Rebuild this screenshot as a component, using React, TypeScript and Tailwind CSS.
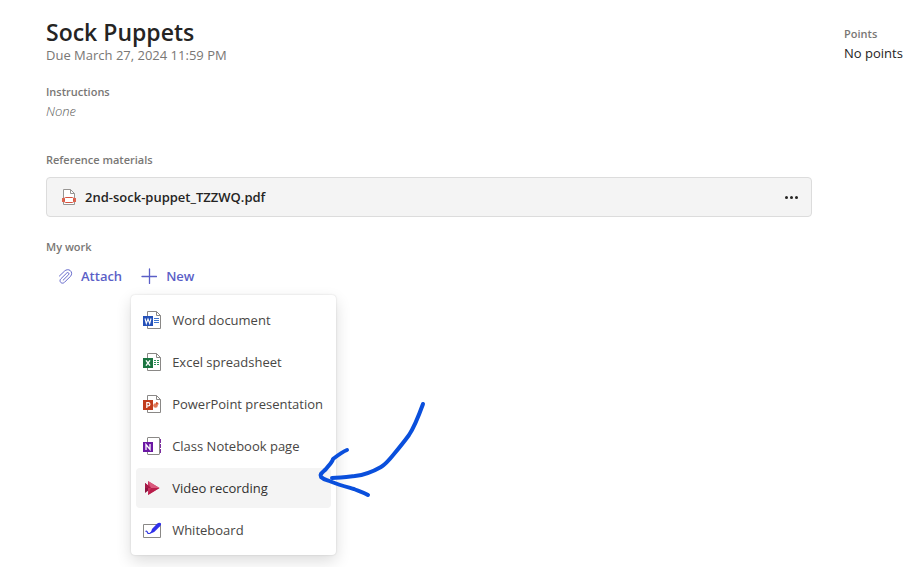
import * as React from "react";

type IconProps = { className?: string };

function WordIcon({ className }: IconProps) {
  return (
    <svg viewBox="0 0 18 18" className={className} fill="none" aria-hidden="true">
      <path d="M4.5.5h9l4 4v13h-13z" fill="#fff" stroke="#8a8886" />
      <path d="M13.5.5v4h4" stroke="#8a8886" />
      <path d="M11 7.5h5M11 9.5h5M11 11.5h5" stroke="#3f76d0" />
      <path d="M0 5h10v10H0z" fill="#2450b8" />
      <path d="M2 7.5l1.3 5L5 8l1.7 4.5 1.3-5" stroke="#fff" strokeWidth="1.1" />
    </svg>
  );
}

function ExcelIcon({ className }: IconProps) {
  return (
    <svg viewBox="0 0 18 18" className={className} fill="none" aria-hidden="true">
      <path d="M4.5.5h9l4 4v13h-13z" fill="#fff" stroke="#8a8886" />
      <path d="M13.5.5v4h4" stroke="#8a8886" />
      <path d="M11 7.5h2M14 7.5h2M11 9.5h2M14 9.5h2M11 11.5h2M14 11.5h2" stroke="#2b9058" />
      <path d="M0 5h10v10H0z" fill="#1a7440" />
      <path d="M3 7.3l4 5.4M7 7.3l-4 5.4" stroke="#fff" strokeWidth="1.4" />
    </svg>
  );
}

function PowerPointIcon({ className }: IconProps) {
  return (
    <svg viewBox="0 0 18 18" className={className} fill="none" aria-hidden="true">
      <path d="M4.5.5h9l4 4v13h-13z" fill="#fff" stroke="#8a8886" />
      <path d="M13.5.5v4h4" stroke="#8a8886" />
      <circle cx="12.5" cy="10.5" r="2.3" fill="#e07a5a" />
      <path d="M13 7a2.6 2.6 0 0 1 2.6 2.6H13z" fill="#d35230" />
      <path d="M0 5h10v10H0z" fill="#c13b1b" />
      <path d="M3.8 13V7.6h1.500a1.600 1.600 0 0 1 0 3.200H3.8" stroke="#fff" strokeWidth="1.2" />
    </svg>
  );
}

function NotebookIcon({ className }: IconProps) {
  return (
    <svg viewBox="0 0 18 18" className={className} fill="none" aria-hidden="true">
      <rect x="4.5" y=".5" width="12" height="17" rx=".5" fill="#fff" stroke="#8a8886" />
      <path d="M17.5 2v4M17.5 7v4M17.5 12v4" stroke="#7b2f9e" />
      <path d="M0 5h10v10H0z" fill="#6a17a3" />
      <path d="M3 13V7.5l4 5V7" stroke="#fff" strokeWidth="1.3" />
    </svg>
  );
}

function StreamIcon({ className }: IconProps) {
  return (
    <svg viewBox="0 0 18 18" className={className} aria-hidden="true">
      <path d="M2 4v10l4-3V7z" fill="#8c1440" />
      <path d="M5 2l11.5 7L5 16z" fill="#c9305e" />
      <path d="M5 2l11.5 7H8z" fill="#d9587c" />
      <path d="M8 9h8.5L5 16z" fill="#b81d4a" />
      <path d="M2 4l6 5H2z" fill="#a51a47" />
    </svg>
  );
}

function WhiteboardIcon({ className }: IconProps) {
  return (
    <svg viewBox="0 0 18 18" className={className} fill="none" aria-hidden="true">
      <path d="M.5 3.5h17v13H.5z" fill="#fff" stroke="#8a8886" />
      <path d="M2.5 10.5c1-.6 1.600-.3 1.800.7.3 1.500 1.500 1.500 2.700 1l2-1.500" stroke="#3136e0" strokeWidth="1.2" />
      <path d="M7.5 12.5L9 8l5-5.300c1.200-1.200 3.600-1.200 4-.2.3 1-.4 2.200-1.200 3L11.200 11z" fill="#3030ea" />
    </svg>
  );
}

function PdfIcon({ className }: IconProps) {
  return (
    <svg viewBox="0 0 16 16" className={className} fill="none" aria-hidden="true">
      <path d="M2.5.5h7l4 4v11h-11z" fill="#fff" stroke="#979593" />
      <path d="M9.5.5v4h4" stroke="#979593" />
      <path d="M1 9h14v4H1z" fill="#dc6650" />
      <rect x="3.5" y="8.5" width="9" height="5" rx="1" fill="#fff" stroke="#d65542" />
    </svg>
  );
}

function AttachIcon({ className }: IconProps) {
  return (
    <svg
      viewBox="0 0 16 16"
      className={className}
      fill="none"
      stroke="currentColor"
      strokeLinecap="round"
      aria-hidden="true"
    >
      <path d="M1.5 7.5L7 2.2c1.600-1.600 4.200-2 6-.6 2 1.600 2 4.400.3 6.200l-6.500 6.500c-1 1-2.700 1.100-3.800.1-1.100-1-1.100-2.800 0-3.900l6.400-6.300a1.300 1.300 0 0 1 1.900 1.900L5.5 11.9" />
    </svg>
  );
}

function PlusIcon({ className }: IconProps) {
  return (
    <svg
      viewBox="0 0 16 16"
      className={className}
      fill="none"
      stroke="currentColor"
      strokeLinecap="round"
      aria-hidden="true"
    >
      <path d="M8.5 1v14.500M1 8.500h14.500" strokeWidth="1.3" />
    </svg>
  );
}

const menuItems = [
  { label: "Word document", icon: WordIcon },
  { label: "Excel spreadsheet", icon: ExcelIcon },
  { label: "PowerPoint presentation", icon: PowerPointIcon },
  { label: "Class Notebook page", icon: NotebookIcon },
  { label: "Video recording", icon: StreamIcon },
  { label: "Whiteboard", icon: WhiteboardIcon },
];

function NewMenu() {
  const [active, setActive] = React.useState("Video recording");

  return (
    <div
      role="menu"
      aria-label="New"
      className="absolute top-full left-0 flex w-max flex-col gap-0.5 rounded bg-white p-[5px] shadow-[0_0_2px_rgba(0,0,0,0.16),0_6px_16px_rgba(0,0,0,0.14)]"
    >
      {menuItems.map(({ label, icon: Icon }) => (
        <button
          key={label}
          type="button"
          role="menuitem"
          onClick={() => setActive(label)}
          className={
            label === active
              ? "flex h-10 items-center gap-[11px] rounded bg-[#f4f4f4] pr-2 pl-[7px] text-left text-[#323130]"
              : "flex h-10 items-center gap-[11px] rounded pr-2 pl-[7px] text-left text-[#484644]"
          }
        >
          <Icon className="size-[18px] shrink-0" />
          {label}
        </button>
      ))}

      {/* hand-drawn arrow */}
      <svg
        viewBox="0 0 116 104"
        className="pointer-events-none absolute top-[103px] left-[184px] h-[104px] w-[116px]"
        fill="none"
        stroke="#0a4fdc"
        strokeWidth="4"
        strokeLinecap="round"
        strokeLinejoin="round"
        aria-hidden="true"
      >
        <path d="M108 6C104 17 100 28 94 37 89 44 84 50 79 56c-4 5-8 10-13 13-7 4-17 8-26 9-8 1-15 2-23 2" />
        <path d="M32 52c-5 2-10 6-14 9-1 4-5 7-7 10-3 3-7 5-5 8 3 3 7 3 11 5 7 3 15 5 22 7 5 2 9 3 14 6" />
      </svg>
    </div>
  );
}

export default function App() {
  return (
    <div className="flex min-h-screen items-start gap-8 bg-white pt-4 pr-4 pl-[46px] font-['Open_Sans','Noto_Sans',sans-serif] text-[13px] leading-5 text-[#252423]">
      <main className="min-w-0 flex-1">
        <h1 className="text-[23px] leading-8 font-semibold">Sock Puppets</h1>
        <p className="leading-[14px] text-[#797775]">Due March 27, 2024 11:59 PM</p>

        <h2 className="mt-5 text-[11px] font-semibold text-[#797775]">Instructions</h2>
        <p className="leading-[18px] font-light text-[#605e5c] italic">None</p>

        <h2 className="mt-[30px] text-[11px] font-semibold text-[#797775]">Reference materials</h2>
        <div className="mt-[7px] flex h-10 items-center rounded-sm border border-[#dcdcdc] bg-[#f4f4f4] pr-[13px] pl-3.5">
          <a href="#" className="flex items-center gap-2 font-semibold">
            <PdfIcon className="size-4" />
            2nd-sock-puppet_TZZWQ.pdf
          </a>
          <button type="button" aria-label="More options" className="ml-auto flex w-[13px] justify-between">
            <span className="size-[3px] rounded-full bg-[#252423]" />
            <span className="size-[3px] rounded-full bg-[#252423]" />
            <span className="size-[3px] rounded-full bg-[#252423]" />
          </button>
        </div>

        <h2 className="mt-5 text-[11px] font-semibold text-[#797775]">My work</h2>
        <div className="flex pl-3">
          <button type="button" className="flex h-[38px] items-center gap-2 font-semibold text-[#5b5fc7]">
            <AttachIcon className="size-[15px]" />
            Attach
          </button>
          <div className="relative ml-[9px]">
            <button
              type="button"
              aria-haspopup="menu"
              aria-expanded="true"
              className="flex h-[38px] items-center gap-[9px] pl-2.5 font-semibold text-[#5b5fc7]"
            >
              <PlusIcon className="size-4" />
              New
            </button>
            <NewMenu />
          </div>
        </div>
      </main>

      <aside className="mt-2 w-[61px] shrink-0">
        <h2 className="text-[11px] font-semibold text-[#797775]">Points</h2>
        <p className="leading-[18px]">No points</p>
      </aside>
    </div>
  );
}
